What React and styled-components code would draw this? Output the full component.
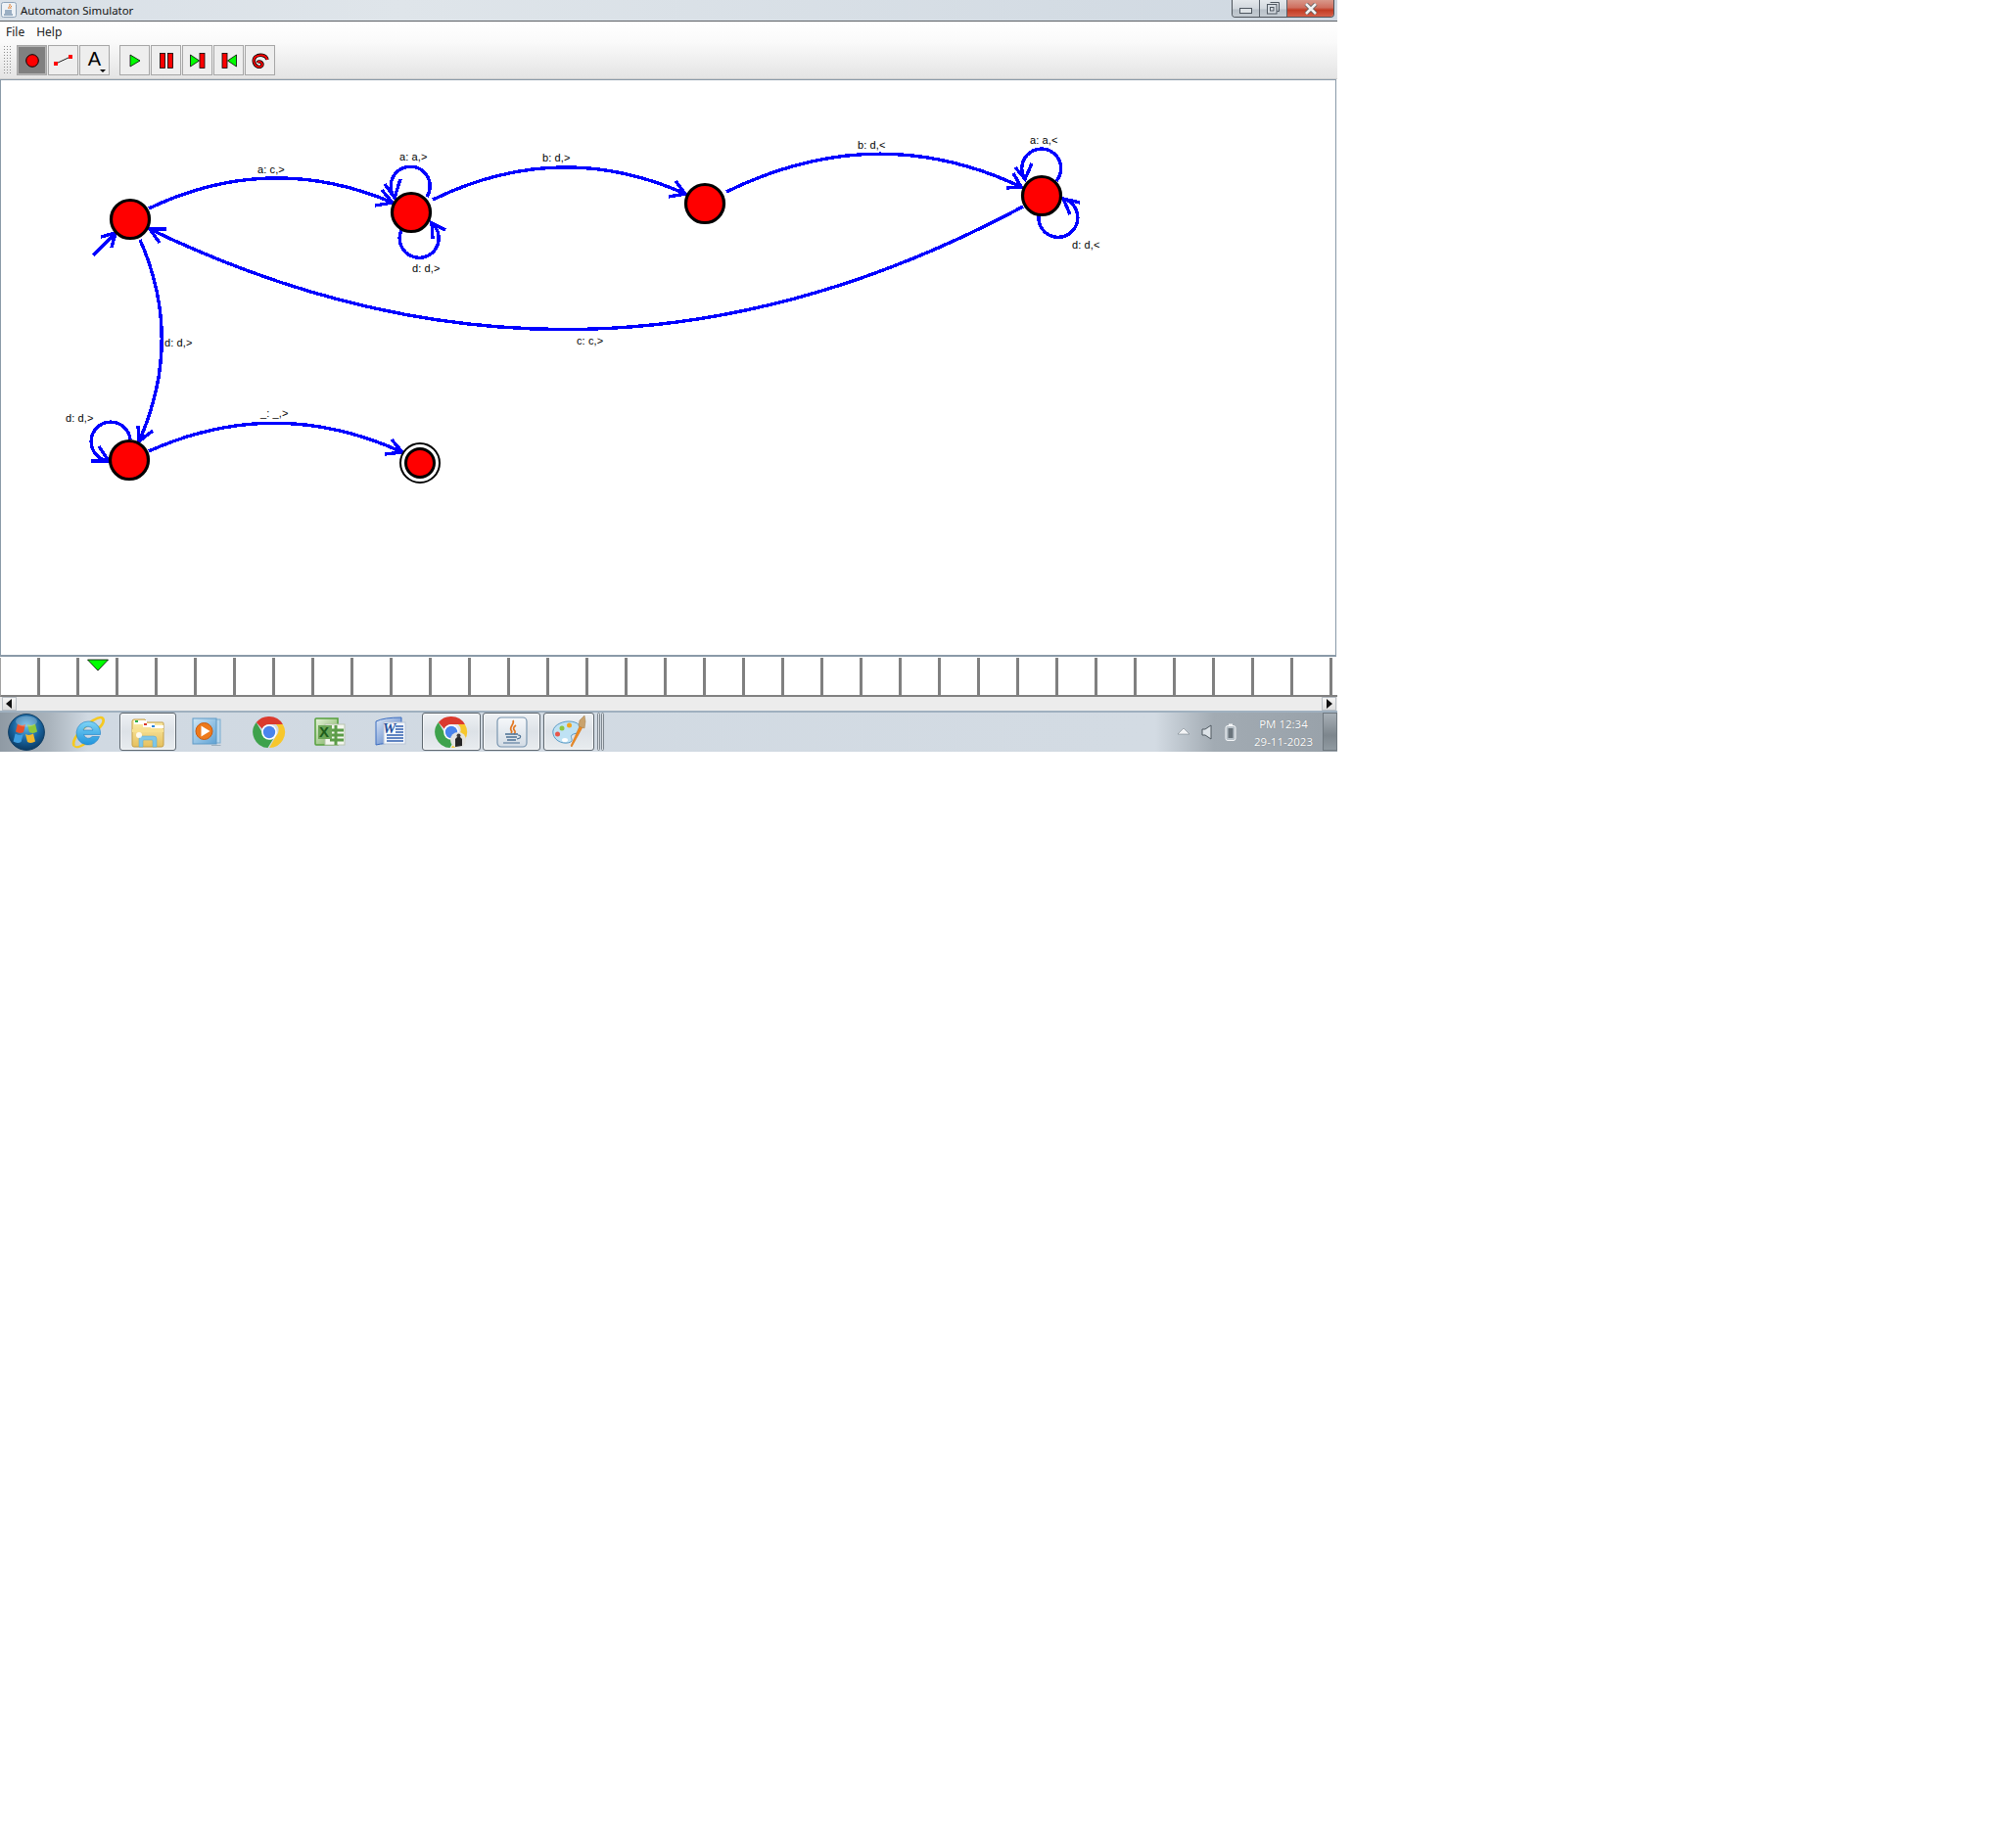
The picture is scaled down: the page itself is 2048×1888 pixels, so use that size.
import React from 'react';
import styled, { createGlobalStyle } from 'styled-components';

const Global = createGlobalStyle`
  html, body { margin: 0; padding: 0; background: #fff; }
  body { font-family: "Noto Sans", "Liberation Sans", sans-serif; }
`;

const Page = styled.div`
  width: 2048px; height: 1888px; background: #fff;
`;
const Win = styled.div`
  width: 1366px; height: 768px; display: flex; flex-direction: column; overflow: hidden;
`;
const TitleBar = styled.div`
  height: 21px; flex: none; display: flex; align-items: flex-start;
  background: linear-gradient(90deg, #d9e0e7 0%, #dfe5ea 30%, #cfd8e1 100%);
  border-bottom: 1px solid #5d6166;
  box-sizing: content-box;
`;
const TitleIcon = styled.svg`
  width: 16px; height: 16px; margin: 2px 0 0 1px; flex: none;
`;
const TitleText = styled.div`
  font: 11.4px/21px "Noto Sans", sans-serif; color: #111; margin-left: 4px;
`;
const WinControls = styled.div`
  margin-left: auto; margin-right: 3px; display: flex; height: 17px;
  border: 1px solid #4e555c; border-top: 0; border-radius: 0 0 4px 4px; overflow: hidden;
`;
const WinBtn = styled.div`
  width: ${p => p.$w}px; display: flex; align-items: center; justify-content: center;
  background: ${p => p.$close
    ? 'linear-gradient(#d8988a 0%, #cf7060 45%, #c23c24 60%, #d4604a 100%)'
    : 'linear-gradient(#e4e8ec 0%, #d2d8de 50%, #b9c1c9 60%, #c4cbd2 100%)'};
  border-right: ${p => p.$last ? 0 : '1px solid #59616a'};
`;
const MinGlyph = styled.svg`
  margin-top: 5px;
`;
const MenuBar = styled.div`
  height: 21px; flex: none; display: flex; gap: 12px; padding-left: 6px;
  background: linear-gradient(#fff, #fafafa);
  font: 12px/22px "Noto Sans", sans-serif; color: #222;
`;
const ToolBar = styled.div`
  height: 38px; flex: none; display: flex; align-items: flex-start; padding: 3px 0 0 3px; box-sizing: border-box;
  background: linear-gradient(#fafafa, #e4e4e4);
  border-bottom: 1px solid #cfcfcf;
`;
const Grip = styled.div`
  width: 9px; height: 31px; margin-right: 5px;
  background-image: radial-gradient(#8c8c8c 0.8px, transparent 1px);
  background-size: 3px 3px;
`;
const ToolGroup = styled.div`
  display: flex; gap: 1px; margin-right: ${p => p.$mr || 0}px;
`;
const ToolBtn = styled.div`
  position: relative; width: 31px; height: 31px; box-sizing: border-box; padding-top: 1px;
  border: 1px solid #a6a6a6; display: flex; align-items: center; justify-content: center;
  background: ${p => p.$active ? '#808080' : '#eeeeee'};
  box-shadow: inset 0 0 0 ${p => p.$active ? '1px #b5b5b5' : '0 #000'};
`;
const LetterA = styled.span`
  font: 20px/22px "Liberation Sans", sans-serif; color: #000; margin-top: -4px;
`;
const Corner = styled.i`
  position: absolute; right: 3px; bottom: 2px; width: 0; height: 0;
  border: 3px solid transparent; border-top: 3px solid #000; border-bottom: 0;
`;
const Canvas = styled.div`
  height: 590px; flex: none; box-sizing: border-box; background: #fff;
  border: 1px solid #8a9aa8; border-bottom-width: 2px; overflow: hidden;
  margin-right: 1px;
`;
const Diagram = styled.svg`
  display: block; width: 1363px; height: 587px; margin-left: -1px;
`;
const Tape = styled.div`
  height: 40px; flex: none; display: flex; overflow: hidden; margin-top: 1px;
  border-bottom: 2px solid #808080; box-sizing: border-box; border-left: 1px solid #a0a0a0;
`;
const Cell = styled.div`
  position: relative; width: 40px; flex: none; box-sizing: border-box; background: #fff;
  border-right: 3px solid #808080;
`;
const Head = styled.svg`
  position: absolute; left: 8px; top: 1px; width: 22px; height: 13px;
`;
const ScrollBar = styled.div`
  height: 16px; flex: none; display: flex; background: #ececec; box-sizing: border-box;
  border-bottom: 2px solid #9fb0bf;
`;
const ScrollBtn = styled.div`
  width: 15px; flex: none; display: flex; align-items: center; justify-content: center;
  background: linear-gradient(#f5f5f5, #dedede); border: 1px solid #b9bfc5; box-sizing: border-box;
  margin: ${p => p.$right ? '0 1px 0 auto' : '0 0 0 2px'};
`;
const Taskbar = styled.div`
  flex: 1; display: flex; align-items: stretch; padding-bottom: 1px; box-sizing: border-box;
  background: linear-gradient(90deg, #8f9aa4 0, #a9b3bc 50px, #d0d9e2 90px, #d3dbe3 1180px, #a2abb3 1240px, #99a2aa 1350px);
`;
const Slot = styled.div`
  width: ${p => p.$w}px; flex: none; display: flex; align-items: center; justify-content: center;
  margin-left: ${p => p.$ml || 0}px;
`;
const TaskBtn = styled(Slot)`
  box-sizing: border-box; border: 1px solid #5f6870; border-radius: 3px;
  background: linear-gradient(#eef1f4, #dde2e7 50%, #e8ecef);
  box-shadow: inset 0 0 0 1px rgba(255,255,255,.55);
`;
const Slice = styled.div`
  width: 3px; flex: none; margin-left: ${p => p.$ml || 1}px; box-sizing: border-box; border: 1px solid #7d868e; background: #dde2e7;
  border-radius: 2px;
`;
const Tray = styled.div`
  margin-left: auto; display: flex; align-items: center; height: 100%;
`;
const TrayIcons = styled.div`
  display: flex; align-items: center; gap: 12px;
`;
const Clock = styled.div`
  width: 76px; margin-left: 10px; padding-top: 2px; text-align: center; color: #fff; font: 11.5px/18px "Open Sans", sans-serif;
  text-shadow: 0 0 1px rgba(0,0,0,.35);
`;
const ShowDesktop = styled.div`
  width: 15px; height: 39px; margin-left: 2px; box-sizing: border-box; border: 1px solid #6f787f;
  background: linear-gradient(#a7afb6, #7d868d 60%, #909aa1);
`;

const Label = styled.text`
  font: 11px "Liberation Sans", sans-serif; letter-spacing: .1px; fill: #000;
`;

const Red = '#ff0000';

const tbStroke = { stroke: '#000', strokeWidth: 1 };

const curves = [
  'M152 213 Q276 154 401 207',
  'M442 204 Q572 141 700 198',
  'M742 196 Q895 121 1043 191',
  'M1045 211 Q600 450 153 234',
  'M143 245 Q188 347 142 451',
  'M152 461 Q281 403 411 462',
  'M95 261 L118 238',
  'M436 201 A20 20 0 1 0 403 202',
  'M410 235 A20 20 0 1 0 441 228',
  'M1079 185 A20 20 0 1 0 1047 183',
  'M1061 220 A20 20 0 1 0 1086 203',
  'M133 449 A20 20 0 1 0 111 471',
];
const heads = [
  [[383, 210], [401, 207], [390, 194]],
  [[683, 201], [700, 198], [690, 185]],
  [[1028, 192], [1043, 191], [1035, 177]],
  [[170, 234], [153, 234], [163, 248]],
  [[141, 435], [142, 451], [156, 440]],
  [[393, 464], [411, 462], [400, 449]],
  [[103, 242], [118, 238], [114, 253]],
  [[393, 188], [403, 202], [409, 183]],
  [[442, 244], [441, 228], [455, 235]],
  [[1037, 171], [1047, 183], [1054, 167]],
  [[1103, 207], [1086, 203], [1093, 219]],
  [[93, 471], [111, 471], [101, 456]],
];
const states = [[133, 224], [420, 217], [720, 208], [1064, 200], [132, 470]];
const labels = [
  [263, 177, 'a: c,>'], [408, 164, 'a: a,>'], [421, 278, 'd: d,>'], [554, 165, 'b: d,>'],
  [876, 152, 'b: d,<'], [1052, 147, 'a: a,<'], [1095, 254, 'd: d,<'], [589, 352, 'c: c,>'],
  [168, 354, 'd: d,>'], [67, 431, 'd: d,>'], [266, 426, '_: _,>'],
];

const Defs = () => (
  <svg width="0" height="0" style={{ position: 'absolute' }}>
    <defs>
      <radialGradient id="orb" cx="50%" cy="35%" r="65%"><stop offset="0" stopColor="#5fb6e6" /><stop offset=".6" stopColor="#17609a" /><stop offset="1" stopColor="#0b3a62" /></radialGradient>
      <linearGradient id="folder" x1="0" y1="0" x2="0" y2="1"><stop offset="0" stopColor="#fdf0b0" /><stop offset="1" stopColor="#e6c05e" /></linearGradient>
      <linearGradient id="wmp" x1="0" y1="0" x2="1" y2="1"><stop offset="0" stopColor="#cfe6f6" /><stop offset="1" stopColor="#5ea2d4" /></linearGradient>
      <linearGradient id="xl" x1="0" y1="0" x2="1" y2="1"><stop offset="0" stopColor="#e6f2da" /><stop offset="1" stopColor="#76ad58" /></linearGradient>
      <linearGradient id="wd" x1="0" y1="0" x2="1" y2="1"><stop offset="0" stopColor="#dfe9f7" /><stop offset="1" stopColor="#3f6fc0" /></linearGradient>
      <linearGradient id="jv" x1="0" y1="0" x2="0" y2="1"><stop offset="0" stopColor="#f6f8fa" /><stop offset="1" stopColor="#d3dce5" /></linearGradient>
      <linearGradient id="ie" x1="0" y1="0" x2="0" y2="1"><stop offset="0" stopColor="#7fd4f6" /><stop offset="1" stopColor="#1f94dc" /></linearGradient>
    </defs>
  </svg>
);

const Chrome = ({ photo }) => (
  <svg width="34" height="34" viewBox="0 0 34 34">
    <path d="M17 1a16 16 0 0 1 13.900 8H17a8 8 0 0 0-7.300 4.600L3.800 7A16 16 0 0 1 17 1z" fill="#db3a2e" />
    <path d="M30.900 9A16 16 0 0 1 17 33l6.900-12A8 8 0 0 0 24 9z" fill="#f7c72c" />
    <path d="M3.800 7l7 12a8 8 0 0 0 10.200 5L15.500 33A16 16 0 0 1 3.800 7z" fill="#3ea24c" />
    <circle cx="17" cy="17" r="7.800" fill="#fff" /><circle cx="17" cy="17" r="6.200" fill="#4a84ec" />
    {photo && <g><circle cx="24" cy="25" r="8" fill="#e3e3e0" /><path d="M21 32v-8l2-2h3l2 2v7z" fill="#262626" /><circle cx="24.500" cy="20.500" r="2" fill="#3a3a3a" /></g>}
  </svg>
);

const StartOrb = () => (
  <svg width="38" height="38" viewBox="0 0 38 38">
    <circle cx="19" cy="19" r="18.400" fill="url(#orb)" stroke="#0f3d63" />
    <path d="M18 11q-4 2-8-.5l-2 8q4 2.500 8 .5z" fill="#e8502a" />
    <path d="M20 11q4 2 8-.5l2 8q-4 2.500-8 .5z" fill="#8fc83c" />
    <path d="M15.600 21q-4 2-8-.5l-2 8q4 2.500 8 .5z" fill="#3d9de0" />
    <path d="M18 21q4 2 8-.5l2 8q-4 2.500-8 .5z" fill="#f5b82a" />
    <ellipse cx="19" cy="8" rx="11" ry="5.500" fill="#fff" opacity=".25" />
  </svg>
);

const IE = () => (
  <svg width="34" height="34" viewBox="0 0 34 34">
    <path d="M3 31c-3-3 2-12 9-18C21 5 29 0 32 3c2 3-1 7-4 10" fill="none" stroke="#f5c922" strokeWidth="2.800" />
    <path d="M3 31c2 3 8 0 12-3" fill="none" stroke="#f5c922" strokeWidth="2.200" />
    <path d="M17 6a12 12 0 1 0 11.500 15.500h-7.300a5 5 0 0 1-8.700-2h17A12 12 0 0 0 17 6zm-5 9a5.200 5.200 0 0 1 10 0z" fill="url(#ie)" stroke="#1b7ec4" strokeWidth=".6" fillRule="evenodd" />
  </svg>
);

const Folder = () => (
  <svg width="34" height="32" viewBox="0 0 34 32">
    <path d="M1 5q0-2 2-2h11l2 3h16q1 0 1 1v22q0 2-2 2H3q-2 0-2-2z" fill="url(#folder)" stroke="#c5a047" />
    <path d="M3 4h13v4H3z" fill="#fff" /><rect x="4" y="4" width="3" height="2" fill="#2fae4a" />
    <path d="M12 7h12v4H12z" fill="#fff" /><rect x="13" y="7" width="3" height="2" fill="#d83a2a" />
    <path d="M20 9h13v3H20z" fill="#fff" /><rect x="21" y="9" width="3" height="2" fill="#2a84d8" />
    <path d="M1 13h32v3H1z" fill="#f7e08e" />
    <path d="M8 31v-8q0-3 3-3h12q3 0 3 3v8h-4v-6q0-1-1-1h-8q-1 0-1 1v6z" fill="#7fc6e8" stroke="#5aa5cc" strokeWidth=".5" />
    <circle cx="8" cy="19" r="3" fill="#fff" opacity=".85" />
  </svg>
);

const WMP = () => (
  <svg width="32" height="32" viewBox="0 0 32 32">
    <rect x="5" y="3" width="24" height="24" fill="#b7d6ec" stroke="#7badd0" />
    <rect x="1" y="2" width="24" height="26" fill="url(#wmp)" stroke="#5f9ac6" />
    <circle cx="12.500" cy="15" r="8.500" fill="#ee7a1c" stroke="#c95a10" />
    <path d="M9.500 9.500l9 5.500-9 5.500z" fill="#fff" />
    <path d="M20 30h9l1-1h-10z" fill="#9fb0bd" />
  </svg>
);

const Excel = () => (
  <svg width="34" height="34" viewBox="0 0 34 34">
    <path d="M2 4q0-1 1-1h22v27H3q-1 0-1-1z" fill="url(#xl)" stroke="#55a03c" strokeWidth="1.500" />
    <rect x="12" y="9" width="20" height="21" fill="#f4f7ef" stroke="#b8c4ae" />
    <path d="M17 15h14M17 20h14M17 25h14M23 10v20" stroke="#5b9c48" strokeWidth="3" />
    <rect x="5" y="10" width="14" height="14" fill="#6ba657" />
    <text x="6" y="22" fontFamily="Liberation Sans" fontWeight="700" fontSize="15" fill="#1d5c1a">X</text>
  </svg>
);

const Word = () => (
  <svg width="34" height="34" viewBox="0 0 34 34">
    <path d="M2 6q8-4 26-4v26q-18 0-26 2z" fill="url(#wd)" stroke="#3a6cc0" />
    <rect x="10" y="7" width="22" height="22" fill="#f4f7fb" stroke="#b7c4d6" />
    <path d="M13 20h17M13 23h17M13 26h17M22 11h8M22 14h8M22 17h8" stroke="#2f5fb0" strokeWidth="1.600" />
    <text x="9" y="18" fontFamily="Liberation Serif" fontWeight="700" fontStyle="italic" fontSize="15" fill="#244f9c">W</text>
  </svg>
);

const Java = () => (
  <svg width="32" height="32" viewBox="0 0 32 32">
    <rect x="1" y="1" width="30" height="30" rx="4" fill="url(#jv)" stroke="#7a96b0" strokeWidth="1.200" />
    <path d="M17 4c2 4-4 6-2 10 1 1 1 2 0 3M20 9c-3 2-3 4-1 6 .5 1 0 2-1 3" fill="none" stroke="#e2761f" strokeWidth="1.700" />
    <path d="M9 18h13M10 21h11M11 24h9" stroke="#4a6f92" strokeWidth="1.400" />
    <path d="M22 19q4 0 2 3l-3 1M7 27h17" fill="none" stroke="#4a6f92" strokeWidth="1.200" />
  </svg>
);

const Palette = () => (
  <svg width="38" height="36" viewBox="0 0 38 36">
    <path d="M3 20c-2-8 8-13 16-13 9 0 14 5 11 10-2 3-6 2-8 4s2 5-1 7c-6 3-16 0-18-8z" fill="#bfe2f4" stroke="#5d9cc6" />
    <circle cx="7.500" cy="20" r="2.500" fill="#e8564a" /><circle cx="12" cy="14" r="2.500" fill="#8dc63f" /><circle cx="19.500" cy="11" r="2.500" fill="#f2a51e" />
    <ellipse cx="15" cy="26" rx="3" ry="2" fill="#fff" />
    <path d="M22 33l-1-1 9-20 3 1z" fill="#ef8a1f" stroke="#c96a10" strokeWidth=".5" />
    <path d="M29 12l1-6 5-5 1 6-1 7z" fill="#c9a26c" stroke="#9c7a48" strokeWidth=".5" />
  </svg>
);

const JavaMini = () => (
  <TitleIcon viewBox="0 0 16 16">
    <rect x=".5" y=".5" width="15" height="15" rx="2" fill="#eef2f6" stroke="#8ea3b8" />
    <path d="M9 2c1 2-2 3-1 5M11 4c-2 1-1 2-1 3" fill="none" stroke="#e2761f" />
    <path d="M4 9h7M4 11h7M3 13h9" stroke="#496d90" />
  </TitleIcon>
);

export default function App() {
  return (
    <Page>
      <Global />
      <Defs />
      <Win>
        <TitleBar>
          <JavaMini />
          <TitleText>Automaton Simulator</TitleText>
          <WinControls>
            <WinBtn $w={27}>
              <MinGlyph width="14" height="7" viewBox="0 0 14 7"><rect x=".5" y=".5" width="12" height="5" fill="#dde2e6" stroke="#4e5760" /></MinGlyph>
            </WinBtn>
            <WinBtn $w={27}>
              <svg width="13" height="13" viewBox="0 0 13 13"><path d="M3.500 .5h9v9h-2" fill="none" stroke="#4e5760" /><rect x=".5" y="2.500" width="9.500" height="9.500" fill="#d6dce2" stroke="#4e5760" /><rect x="3.500" y="5.500" width="3.500" height="3.500" fill="none" stroke="#4e5760" /></svg>
            </WinBtn>
            <WinBtn $w={47} $close $last>
              <svg width="16" height="12" viewBox="0 0 16 12"><path d="M3 1l10 10M13 1L3 11" stroke="#5a5a5a" strokeWidth="4.200" /><path d="M3 1l10 10M13 1L3 11" stroke="#f2f2f2" strokeWidth="2.600" /></svg>
            </WinBtn>
          </WinControls>
        </TitleBar>
        <MenuBar><span>File</span><span>Help</span></MenuBar>
        <ToolBar>
          <Grip />
          <ToolGroup $mr={10}>
            <ToolBtn $active>
              <svg width="16" height="16" viewBox="0 0 16 16"><circle cx="8" cy="8" r="6.300" fill={Red} {...tbStroke} /></svg>
            </ToolBtn>
            <ToolBtn>
              <svg width="22" height="14" viewBox="0 0 22 14"><path d="M3 10L18 3" stroke="#222" strokeWidth="1" /><rect x="1" y="8" width="4" height="4" fill={Red} /><rect x="16" y="1" width="4" height="4" fill={Red} /></svg>
            </ToolBtn>
            <ToolBtn><LetterA>A</LetterA><Corner /></ToolBtn>
          </ToolGroup>
          <ToolGroup>
            <ToolBtn>
              <svg width="14" height="16" viewBox="0 0 14 16"><path d="M2 2l10 6-10 6z" fill="#00ff00" stroke="#000" strokeWidth=".8" /></svg>
            </ToolBtn>
            <ToolBtn>
              <svg width="16" height="16" viewBox="0 0 16 16"><rect x="1.500" y=".5" width="5" height="15" fill={Red} stroke="#000" strokeWidth=".8" /><rect x="9.500" y=".5" width="5" height="15" fill={Red} stroke="#000" strokeWidth=".8" /></svg>
            </ToolBtn>
            <ToolBtn>
              <svg width="16" height="16" viewBox="0 0 16 16"><path d="M.5 2l9 6-9 6z" fill="#00ff00" stroke="#000" strokeWidth=".8" /><rect x="10" y=".5" width="5" height="15" fill={Red} stroke="#000" strokeWidth=".8" /></svg>
            </ToolBtn>
            <ToolBtn>
              <svg width="16" height="16" viewBox="0 0 16 16"><rect x="1" y=".5" width="5" height="15" fill={Red} stroke="#000" strokeWidth=".8" /><path d="M15.500 2l-9 6 9 6z" fill="#00ff00" stroke="#000" strokeWidth=".8" /></svg>
            </ToolBtn>
            <ToolBtn>
              <svg width="20" height="20" viewBox="0 0 20 20">
                <path d="M17 9c-1-5-8-6-12-3-3 3-2 8 2 10 2 1 5 0 5-2 0-3-4-4-5-2" fill="none" stroke="#000" strokeWidth="3.400" />
                <path d="M17 9c-1-5-8-6-12-3-3 3-2 8 2 10 2 1 5 0 5-2 0-3-4-4-5-2" fill="none" stroke={Red} strokeWidth="1.800" />
              </svg>
            </ToolBtn>
          </ToolGroup>
        </ToolBar>
        <Canvas>
          <Diagram viewBox="0 82 1363 587" shapeRendering="crispEdges">
            <g fill="none" stroke="#0000ff" strokeWidth="3.400">
              {curves.map(d => <path key={d} d={d} />)}
              {heads.map(h => <polyline key={h.join()} points={h.map(p => p.join(',')).join(' ')} />)}
            </g>
            <g shapeRendering="auto">
              {states.map(([x, y]) => <circle key={x} cx={x} cy={y} r="19.500" fill={Red} stroke="#000" strokeWidth="3.200" />)}
              <circle cx="429" cy="473" r="20" fill="#fff" stroke="#000" strokeWidth="2" />
              <circle cx="429" cy="473" r="14.500" fill={Red} stroke="#000" strokeWidth="3" />
              {labels.map(([x, y, t]) => <Label key={x} x={x} y={y}>{t}</Label>)}
            </g>
          </Diagram>
        </Canvas>
        <Tape>
          {Array.from({ length: 35 }, (_, i) => (
            <Cell key={i}>
              {i === 2 && <Head viewBox="0 0 22 13"><path d="M.5 1h21L11 12z" fill="#00ff00" stroke="#000" strokeWidth=".8" /></Head>}
            </Cell>
          ))}
        </Tape>
        <ScrollBar>
          <ScrollBtn>
            <svg width="7" height="10" viewBox="0 0 7 10"><path d="M6 0v10L0 5z" fill="#111" /></svg>
          </ScrollBtn>
          <ScrollBtn $right>
            <svg width="7" height="10" viewBox="0 0 7 10"><path d="M1 0v10l6-5z" fill="#111" /></svg>
          </ScrollBtn>
        </ScrollBar>
        <Taskbar>
          <Slot $w={54}><StartOrb /></Slot>
          <Slot $w={60} $ml={6}><IE /></Slot>
          <TaskBtn $w={58} $ml={2}><Folder /></TaskBtn>
          <Slot $w={64}><WMP /></Slot>
          <Slot $w={62}><Chrome /></Slot>
          <Slot $w={62}><Excel /></Slot>
          <Slot $w={62}><Word /></Slot>
          <TaskBtn $w={60} $ml={1}><Chrome photo /></TaskBtn>
          <TaskBtn $w={59} $ml={2}><Java /></TaskBtn>
          <TaskBtn $w={52} $ml={3}><Palette /></TaskBtn>
          <Slice $ml={3} />
          <Slice />
          <Tray>
            <TrayIcons>
              <svg width="12" height="7" viewBox="0 0 12 7"><path d="M6 0l6 6H0z" fill="#f2f4f6" stroke="#6b747c" strokeWidth=".5" /></svg>
              <svg width="12" height="16" viewBox="0 0 12 16"><path d="M1 5h3l6-4v14l-6-4H1z" fill="#dde3e8" stroke="#4e5860" /></svg>
              <svg width="12" height="18" viewBox="0 0 12 18"><rect x="1" y="2.500" width="10" height="15" rx="2" fill="#b9c2c9" stroke="#f4f6f8" /><rect x="3.500" y="5" width="5" height="10" fill="#6a747c" /><rect x="4" y=".5" width="4" height="2" fill="#f4f6f8" /></svg>
            </TrayIcons>
            <Clock>PM 12:34<br />29-11-2023</Clock>
            <ShowDesktop />
          </Tray>
        </Taskbar>
      </Win>
    </Page>
  );
}
